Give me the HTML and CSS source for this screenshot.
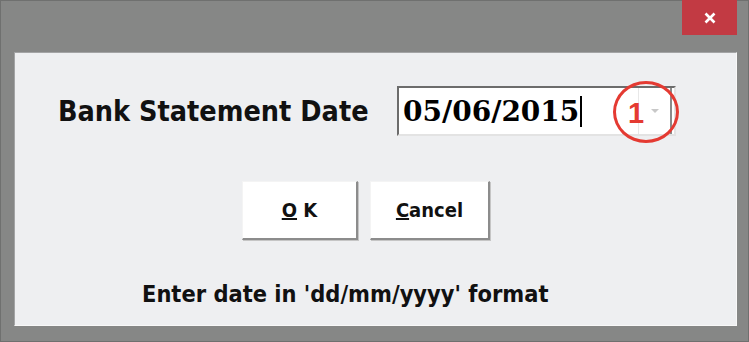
FILE: index.html
```html
<!DOCTYPE html>
<html lang="en">
<head>
  <meta charset="UTF-8">
  <title>Bank Statement Date</title>
  <link rel="stylesheet" href="styles.css">
</head>
<body>
  <div class="window">
    <div class="titlebar">
      <div class="close">
        <svg width="14" height="14" viewBox="0 0 14 14">
          <path d="M2.5 2.5 L11.5 11.5 M11.5 2.5 L2.5 11.5" stroke="#fff" stroke-width="2.6" />
        </svg>
      </div>
    </div>

    <div class="client">
      <div class="row">
        <span class="label">Bank Statement Date</span>
        <div class="datebox">
          <span class="datetext">05/06/2015</span><span class="caret"></span>
          <div class="drop">
            <svg width="10" height="6" viewBox="0 0 10 6"><path d="M1 1 L9 1 L5 5 Z" fill="#c8c8c8" /></svg>
          </div>
          <div class="marker">1</div>
        </div>
      </div>

      <div class="buttons">
        <button class="btn"><u>O</u> K</button>
        <button class="btn btn-wide"><u>C</u>ancel</button>
      </div>

      <div class="hint">Enter date in 'dd/mm/yyyy' format</div>
    </div>
  </div>
</body>
</html>
```

FILE: styles.css
```css
html, body {
  margin: 0;
  padding: 0;
  background: #868786;
}

.window {
  width: 749px;
  height: 342px;
  box-sizing: border-box;
  border: 1px solid #6f706f;
  background: #868786;
  display: flex;
  flex-direction: column;
}

.titlebar {
  height: 51px;
  display: flex;
  justify-content: flex-end;
  padding-right: 11px;
}

.close {
  width: 55px;
  height: 35px;
  margin-top: -1px;
  background: #c23a43;
  display: flex;
  align-items: center;
  justify-content: center;
}

.client {
  margin: 0 11px 0 13px;
  height: 274px;
  box-sizing: border-box;
  background: #eeeff1;
  border-top: 1px solid #a3a4a5;
  border-left: 1px solid #a3a4a5;
  border-right: 1px solid #f8f8f8;
  border-bottom: 1px solid #f8f8f8;
  font-family: "DejaVu Sans Condensed", "DejaVu Sans", sans-serif;
  font-weight: bold;
  color: #111;
  display: flex;
  flex-direction: column;
  align-items: flex-start;
}

.row {
  display: flex;
  align-items: center;
  margin-top: 33px;
  padding-left: 43px;
}

.label {
  font-size: 28.5px;
  width: 339px;
}

.datebox {
  position: relative;
  width: 279px;
  height: 50px;
  box-sizing: border-box;
  background: #fff;
  border-top: 2px solid #6c6c6c;
  border-left: 2px solid #6c6c6c;
  border-right: 2px solid #e3e3e3;
  border-bottom: 2px solid #e3e3e3;
  display: flex;
  align-items: center;
  padding-left: 4px;
}

.datetext {
  font-family: "DejaVu Serif", "Liberation Serif", serif;
  font-size: 28px;
  font-weight: bold;
  color: #000;
}

.caret {
  width: 2px;
  height: 31px;
  background: #000;
  margin-left: 1px;
}

.drop {
  position: absolute;
  right: 2px;
  top: 0;
  width: 31px;
  height: 46px;
  border-left: 1px solid #e8e8e8;
  border-right: 2px solid #8a8a8a;
  display: flex;
  align-items: center;
  justify-content: center;
}

.marker {
  position: absolute;
  left: 214px;
  top: -7px;
  width: 66px;
  height: 62px;
  border: 3px solid #e43a32;
  border-radius: 50%;
  color: #e43a32;
  font-family: "Liberation Sans", sans-serif;
  font-weight: bold;
  font-size: 29px;
  display: flex;
  align-items: center;
  justify-content: center;
  padding-right: 20px;
  padding-top: 2px;
  box-sizing: border-box;
}

.buttons {
  display: flex;
  gap: 12px;
  margin-top: 45px;
  margin-left: 227px;
}

.btn {
  width: 116px;
  height: 59px;
  background: #fff;
  border-top: 1px solid #f4f4f4;
  border-left: 1px solid #f4f4f4;
  border-right: 2px solid #8c8c8c;
  border-bottom: 2px solid #8c8c8c;
  box-shadow: 1px 1px 0 #c5c5c5;
  font-family: "DejaVu Sans Condensed", "DejaVu Sans", sans-serif;
  font-weight: bold;
  font-size: 20px;
  color: #111;
  padding: 0;
}

.btn-wide {
  width: 120px;
}

.hint {
  font-size: 23.4px;
  margin-top: 40px;
  margin-left: 127px;
}
```
